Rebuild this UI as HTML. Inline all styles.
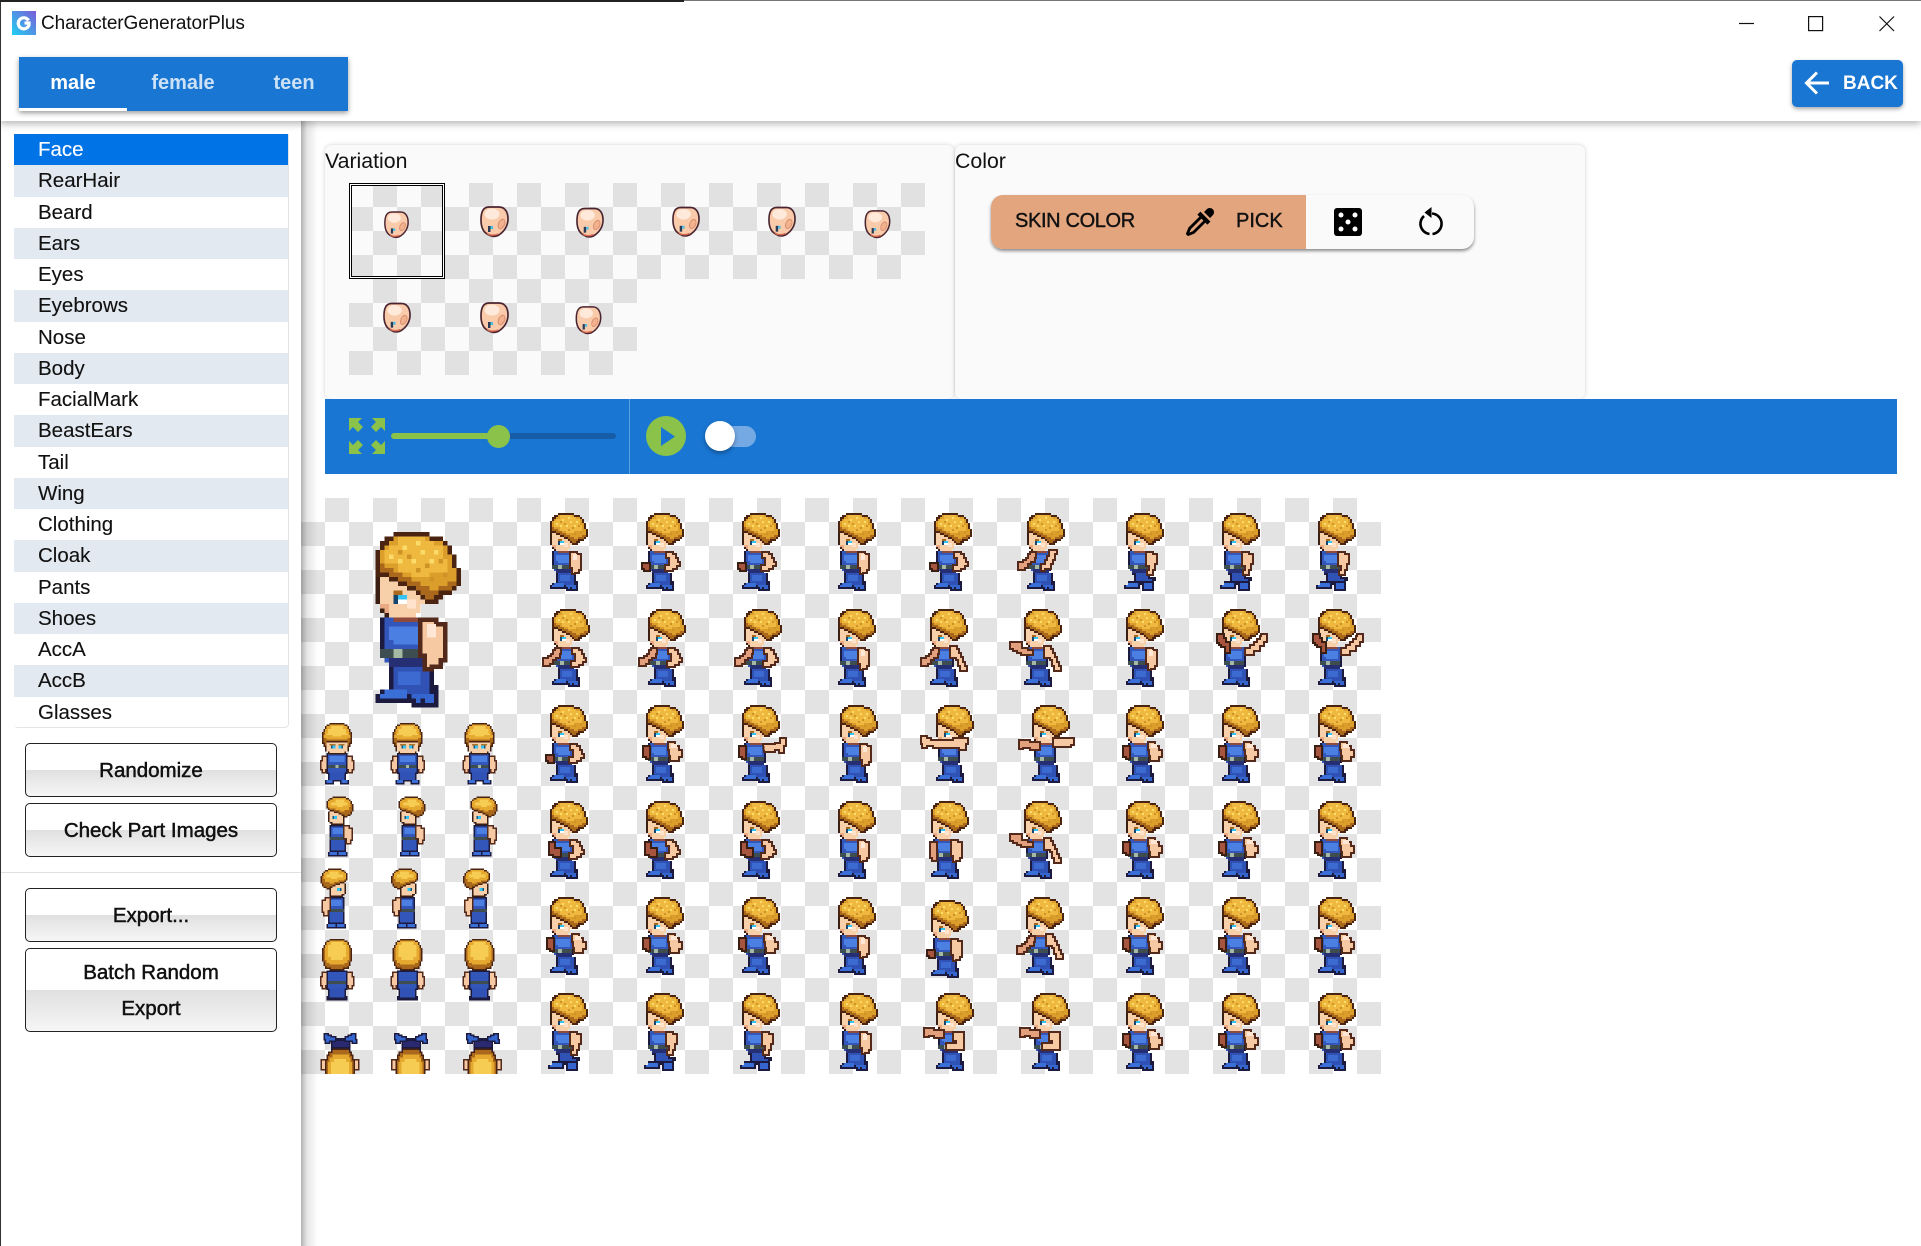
<!DOCTYPE html>
<html><head><meta charset="utf-8"><title>CharacterGeneratorPlus</title>
<style>
html,body{margin:0;padding:0;background:#fff}
body{position:relative;width:1921px;height:1246px;overflow:hidden;font-family:"Liberation Sans",Arial,sans-serif;color:#111}
div,span{position:absolute;box-sizing:border-box}
svg{position:absolute;overflow:visible}
.chk{background:conic-gradient(#e1e1e1 25%,transparent 0 50%,#e1e1e1 0 75%,transparent 0) 0 0/48px 48px}
.chk2{background:conic-gradient(#e3e3e3 25%,#fff 0 50%,#e3e3e3 0 75%,#fff 0) 0 0/48px 48px}
.it{left:14px;width:274px;height:31.25px;line-height:32px;padding-left:24px;font-size:20.5px;color:#111;-webkit-text-stroke:.12px #111}
.alt{background:#e3e9f0}
.btn{left:25px;width:252px;border:1px solid #222;border-radius:5px;background:linear-gradient(#fff 50%,#e0e0e0 50%,#f6f6f6 100%);text-align:center;font-size:20.5px;-webkit-text-stroke:.5px #111;color:#111}
.tab{top:57px;height:54px;line-height:52px;text-align:center;font-weight:bold;font-size:20px;color:#fff}
.lbl{font-size:21.3px;line-height:24px;top:148.5px;color:#111}
.s{fill:#f6c9a2;stroke:#52291a;stroke-width:1}
.d{fill:#e2a07c;stroke:#52291a;stroke-width:1}
.r{fill:#a8553f;stroke:#3b1e12;stroke-width:1}
</style></head><body>

<svg width="0" height="0" style="left:0;top:0">
<defs>
<g id="up" transform="translate(-.5 -.5)">
<path fill="#1c1a3e" d="M18 27H29V37H28V39H20V37H19V36H18Z"/>
<path fill="#3356bb" d="M19 27H28V38H21V37H19Z"/>
<path fill="#4b7fe2" d="M20 29H27V33H21V32H20Z"/>
<path fill="#262e74" d="M20 36H28V38H20Z"/>
<path fill="#3d4d50" d="M18 34H28V36H18Z"/>
<path fill="#a4b8a4" d="M21 34H23V36H21Z"/>
<path fill="#8f4a3a" d="M21 27H27V28H21Z"/>
<path fill="#3b1e12" d="M17 18H18V24H19V26H20V27H19V26H18V24H17Z"/>
<path fill="#f7cfa8" d="M18 18H20V19H22V20H24V21H26V22H27V23H28V24H27V26H26V27H20V26H19V24H18Z"/>
<path fill="#ffe3cc" d="M24 23H26V25H24Z"/>
<path fill="#eaa985" d="M18 24H20V26H19V25H18Z"/>
<path fill="#a9681c" d="M21 21H23V22H21Z"/>
<path fill="#14456e" d="M21 22H22V24H21Z"/>
<path fill="#35c3f4" d="M22 22H24V23H22Z"/>
<path fill="#fff" d="M22 23H24V24H22Z"/>
<path fill="#4a2410" d="M21 8H29V9H32V10H33V11H34V13H35V16H36V20H35V21H34V22H32V23H31V24H28V23H27V22H26V21H24V20H22V19H20V18H17V12H18V10H19V9H21Z"/>
<path fill="#a9681c" d="M21 9H29V10H32V11H33V13H34V16H35V20H34V21H31V22H30V23H28V22H27V21H26V20H24V19H22V18H20V17H18V12H19V11H20V10H21Z"/>
<path fill="#dc9e2a" d="M21 9H29V10H32V11H33V13H34V16H35V19H33V20H31V21H29V20H27V19H25V18H23V17H21V16H19V15H18V12H19V11H20V10H21Z"/>
<path fill="#efb93f" d="M22 9H28V10H30V11H32V14H33V17H29V18H25V17H22V15H19V12H20V11H22Z"/>
<path fill="#fbdc6a" d="M23 11h1v1h-1zM27 12h1v1h-1zM25 14h1v1h-1zM29 14h1v1h-1zM22 14h1v1h-1zM30 12h1v1h-1zM26 10h1v1h-1zM20 13h1v1h-1z"/>
<path fill="#cf9226" d="M24 13h1v1h-1zM28 15h1v1h-1zM26 16h1v1h-1zM31 14h1v1h-1zM22 12h1v1h-1zM32 17h1v1h-1zM29 18h1v1h-1z"/>
</g>
<g id="lg" transform="translate(-.5 -.5)">
<path fill="#c2703a" d="M20 38h1v4h-1z"/>
<path fill="#1c1a3e" d="M20 38H30V42H31V47H25V46H17V44H18V43H20Z"/>
<path fill="#3052b5" d="M21 38H29V44H21Z"/>
<path fill="#3d6ad0" d="M22 39H27V42H22Z"/>
<path fill="#3a6fd8" d="M19 43H24V45H18V44H19Z"/>
<path fill="#3566cf" d="M25 44H30V46H26V45H25Z"/>
<path fill="#1c1a3e" d="M27 45h1v1h-1z"/>
</g>
<g id="lg2" transform="translate(-.5 -.5)">
<path fill="#c2703a" d="M21 38h1v3h-1z"/>
<path fill="#1c1a3e" d="M21 38H29V40H32V42H31V47H25V44H24V46H16V44H18V42H21Z"/>
<path fill="#3052b5" d="M22 38H28V41H30V42H22Z"/>
<path fill="#3a6fd8" d="M18 43H23V45H17V44H18Z"/>
<path fill="#3566cf" d="M26 43H30V46H26Z"/>
</g>
<path id="aH" class="s" d="M26.5 27H30V28H32V36H31V37.5H29V38H27.5V35H26.5Z"/>
<path id="aK" class="s" d="M26.5 27H30V28H31.5V30H32.5V32H33.5V34H32V35.5H30V36.5H26V33.5H28V30H26.5Z"/>
<path id="aF" class="s" d="M26.5 26H30V27.5H31V29.5H32V31.5H33V34H34V36H35V38.5H31.5V36H30.5V33H29.5V32H26.5Z"/>
<path id="aM" class="s" d="M27.5 26H31V28H33V30H34.5V33.5H33V35.5H28.5V33H28V30H27.5Z"/>
<path id="fL" class="r" d="M14.500 32.500H18.500V36.500H15.500V35.500H14.500Z"/>
<path id="rB" class="r" d="M15 28H18.500V34.500H16.500V33.500H15Z"/>
<path id="oL" class="d" d="M21 27H18V28H17V30H16V31H14.500V32H12V36H15.500V35H17V33H18.500V32H20.500V30H21Z"/>
<path id="uL" class="d" d="M21 28H18.500V27H15.500V24H9.500V27.500H11V28.500H13V29.500H15V30.500H21Z"/>
<g id="A"><use href="#up"/><use href="#lg"/><use href="#aH"/><path fill="#ffe6d5" d="M28 28h2v3h-2z"/></g>
<g id="B"><use href="#up"/><use href="#lg"/><use href="#aK"/><use href="#fL"/></g>
<g id="C"><use href="#up"/><use href="#lg"/><use href="#oL"/><path class="s" d="M27.500 26H31.500V28H30.500V31H29.500V33H28.500V35.500H25.500V36.500H23.500V33H25.500V31H26.500V29H27.500Z"/></g>
<g id="D"><use href="#up"/><use href="#lg2"/><path class="s" d="M26.500 27H30V28H32V33H31V36H30V38.500H27V36H28V34H26.500Z"/></g>
<g id="E"><use href="#up"/><use href="#lg"/><use href="#aK"/><use href="#oL"/></g>
<g id="F"><use href="#up"/><use href="#lg"/><use href="#aF"/><use href="#oL"/></g>
<g id="G"><use href="#up"/><use href="#lg"/><use href="#aF"/><use href="#uL"/></g>
<g id="H"><use href="#up"/><use href="#lg"/><path class="r" d="M14 20H17.500V22H18.500V24H20.500V29.500H18V26.500H16V25.500H15V24.500H14Z"/><path class="s" d="M36 20H39V24H37.500V26H35.500V28.500H32.500V30.500H28V27H30.500V25.500H32.500V24H34V22.500H35.500V21H36Z"/></g>
<g id="K"><use href="#up"/><use href="#lg"/><use href="#rB"/><path class="s" d="M27 27H33V26.500H35.500V24H38.500V28H37.500V31.500H35V30H33V31H27.500Z"/></g>
<g id="L"><use href="#up"/><use href="#lg"/><path class="s" d="M9 23H12V24H14V25H25V24H32.500V27H31.500V30H28V29H15V28H12V29H9.500V27H9Z"/></g>
<g id="L2"><use href="#up"/><use href="#lg"/><path class="d" d="M20.500 26H15.500V25H10V29.500H12V29H15.500V30H20.500Z"/><path class="s" d="M27 24H37.500V27.500H36V28.500H27Z"/></g>
<g id="M"><use href="#up"/><use href="#lg"/><use href="#rB"/><use href="#aM"/><path fill="#ffe6d5" d="M29 27h3v2h-3z"/></g>
<g id="N"><use href="#up"/><use href="#lg"/><use href="#aK"/><path class="r" d="M16 28H19V31H22V35.500H18V34.500H16Z"/></g>
<g id="P"><use href="#up"/><use href="#lg"/><use href="#aH"/><path class="d" d="M16 28H19.500V37.500H17V36H16Z"/></g>
<g id="Q"><use href="#up"/><use href="#lg"/><use href="#aH"/><use href="#fL"/></g>
<g id="R"><use href="#up"/><use href="#lg"/><path class="d" d="M20.500 26H15.500V25H10.500V29.500H13V29H15.500V30H20.500Z"/><path class="s" d="M25 27H30.500V36H21.500V32.500H26.500V31.500H25Z"/></g>

<!-- small sprites -->
<g id="hF">
<path fill="#4a2410" d="M19 6H29V7H31V8H32V10H33V12H34V20H33V22H31V19H17V22H15V20H14V12H15V10H16V8H17V7H19Z"/>
<path fill="#a9681c" d="M19 7H29V8H31V10H32V12H33V19H32V21H31V18H17V21H16V19H15V12H16V10H17V8H19Z"/>
<path fill="#e6a92f" d="M19 7H29V8H31V10H32V14H33V16H31V17H17V16H15V14H16V10H17V8H19Z"/>
<path fill="#f6cc52" d="M20 8H28V10H30V13H31V14H27V15H21V14H17V13H18V10H20Z"/>
</g>
<g id="fF">
<path fill="#3b1e12" d="M16 17H32V25H30V27H18V25H16Z"/>
<path fill="#f7cfa8" d="M17 16H31V25H29V26H19V25H17Z"/>
<path fill="#b0732a" d="M19 20h4v1h-4zM25 20h4v1h-4z"/>
<path fill="#155a80" d="M20 21h1v2h-1zM27 21h1v2h-1z"/>
<path fill="#35c3f4" d="M21 21h2v2h-2zM25 21h2v2h-2z"/>
</g>
<g id="bF">
<path class="s" d="M14 28H18V37H16.500V39H14V37H13V31H14Z"/>
<path class="s" d="M30 28H34V31H35V37H34V39H31.500V37H30Z"/>
<path fill="#1c1a3e" d="M17 26H31V40H17Z"/>
<path fill="#3356bb" d="M18 27H30V39H18Z"/>
<path fill="#4b7fe2" d="M19 28H29V32H19Z"/>
<path fill="#3d4d50" d="M18 34H30V36H18Z"/>
<path fill="#a4b8a4" d="M23 34h2v2h-2z"/>
<path fill="#1c1a3e" d="M18 39H30V44H32V47H26V45H22V47H16V44H18Z"/>
<path fill="#3052b5" d="M19 39H29V44H19Z"/>
<path fill="#3a6fd8" d="M17 44H21V46H17ZM27 44H31V46H27Z"/>
</g>
<g id="sF"><use href="#bF"/><use href="#fF"/><use href="#hF"/></g>
<g id="sS">
<path fill="#1c1a3e" d="M19 26H30V38H30V44H31V47H18V44H19Z"/>
<path fill="#3356bb" d="M20 27H29V43H20Z"/>
<path fill="#4b7fe2" d="M21 28H28V32H21Z"/>
<path fill="#3d4d50" d="M19 34H29V36H19Z"/>
<path fill="#3a6fd8" d="M19 44H24V46H19ZM25 44H30V46H25Z"/>
<path fill="#3b1e12" d="M18 17H29V26H20V25H19V24H18Z"/>
<path fill="#f7cfa8" d="M19 17H28V25H21V24H19Z"/>
<path fill="#155a80" d="M21 20h1v2h-1z"/><path fill="#35c3f4" d="M22 20h2v2h-2z"/>
<path class="s" d="M28.500 26.500H32V28H34V36H33V38.500H30V35H28.500Z"/>
<path fill="#4a2410" d="M21 7H30V8H32V9H33V10H34V12H35V17H34V19H33V20H31V21H29V20H27V19H25V18H22V17H19V16H18V15H17V10H18V9H19V8H21Z"/>
<path fill="#a9681c" d="M21 8H30V9H32V10H33V12H34V17H33V19H31V20H29V19H27V18H25V17H22V16H19V15H18V10H19V9H21Z"/>
<path fill="#e6a92f" d="M21 8H30V9H32V10H33V14H32V16H29V17H26V16H23V15H19V14H18V10H19V9H21Z"/>
<path fill="#f6cc52" d="M23 9H29V11H31V13H28V14H24V13H20V11H23Z"/>
</g>
<g id="sB">
<path class="s" d="M14 28H18V37H16.500V39H14V37H13V31H14Z"/>
<path class="s" d="M30 28H34V31H35V37H34V39H31.500V37H30Z"/>
<path fill="#1c1a3e" d="M17 27H31V40H17Z"/>
<path fill="#3356bb" d="M18 28H30V39H18Z"/>
<path fill="#3d4d50" d="M18 34H30V36H18Z"/>
<path fill="#1c1a3e" d="M18 39H30V44H31V47H17V44H18Z"/>
<path fill="#3052b5" d="M19 39H29V45H19Z"/>
<path fill="#4a2410" d="M19 6H29V7H31V8H32V10H33V12H34V21H33V24H32V26H29V27H19V26H16V24H15V21H14V12H15V10H16V8H17V7H19Z"/>
<path fill="#a9681c" d="M19 7H29V8H31V10H32V12H33V21H32V24H31V25H28V26H20V25H17V24H16V21H15V12H16V10H17V8H19Z"/>
<path fill="#e6a92f" d="M19 7H29V8H31V10H32V20H31V22H29V23H19V22H17V20H16V10H17V8H19Z"/>
<path fill="#f6cc52" d="M20 8H28V10H30V18H28V20H20V18H18V10H20Z"/>
</g>
<g id="sP">
<path class="s" d="M13.500 38.500H17V45H13.500ZM35.500 38.500H38.500V45H35.500Z"/>
<path fill="#1c1a3e" d="M20 24H33V33H20Z"/>
<path fill="#2b2a70" d="M21 26H32V30H21Z"/>
<path fill="#3566cf" stroke="#1c1a3e" d="M15.500 21H18V22H20V23H23V26H19V27.500H16V25H15.500ZM33.500 21H36.500V25H37V27.500H34V26H29.500V23H31.500V22H33.500Z"/>
<path fill="#4a2410" d="M21 31H32V33H34V35H35V38H36V48H16V38H17V35H18V33H21Z"/>
<path fill="#a9681c" d="M21 32H32V34H33V36H34V39H35V48H17V39H18V36H19V34H21Z"/>
<path fill="#e6a92f" d="M21 35H32V37H33V40H34V48H18V40H19V37H21Z"/>
<path fill="#f6cc52" d="M22 38H30V40H32V48H20V40H22Z"/>
</g>

<!-- variation face -->
<g id="fc">
<path fill="#f9cbaa" stroke="#4a2530" stroke-width="1.700" d="M9 1H19C25 1 28 6 28 13C28 20 24 26 18 29.500C15 31 11 30.500 9 29C4 27 1 22 1 14C1 6 3 1 9 1Z"/>
<ellipse cx="12" cy="8" rx="7.500" ry="5.500" fill="#ffe9da"/>
<ellipse cx="21.500" cy="18" rx="3" ry="5" transform="rotate(25 21.500 18)" fill="#f2b28e" stroke="#d98e6f"/>
<rect x="8" y="20" width="2.500" height="6" fill="#2a3a55"/>
<rect x="10.500" y="20" width="2.500" height="3" fill="#4bbde0"/>
<path d="M7 27C9 29.500 14 29.800 18 28" stroke="#d96a50" stroke-width="1.500" fill="none"/>
</g>
</defs>
</svg>

<!-- main sheet -->
<div class="chk2" style="left:301px;top:498px;width:1080px;height:576px"></div>
<svg style="left:301px;top:498px" width="216" height="216" viewBox="0 0 48 48" shape-rendering="crispEdges"><use href="#A"/></svg>

<svg style="left:301px;top:714px" width="216" height="360" viewBox="0 0 144 240" shape-rendering="crispEdges">
<clipPath id="cp"><rect width="144" height="240"/></clipPath>
<g clip-path="url(#cp)">
<use href="#sF"/><use href="#sF" x="47"/><use href="#sF" x="95"/>
<use href="#sS" y="48"/><use href="#sS" x="48" y="48"/><use href="#sS" x="96" y="48"/>
<g transform="translate(48 96) scale(-1 1)"><use href="#sS"/></g><g transform="translate(95 96) scale(-1 1)"><use href="#sS"/></g><g transform="translate(143 96) scale(-1 1)"><use href="#sS"/></g>
<use href="#sB" y="144"/><use href="#sB" x="47" y="144"/><use href="#sB" x="95" y="144"/>
<use href="#sP" y="192"/><use href="#sP" x="47" y="192"/><use href="#sP" x="95" y="192"/>
</g></svg>

<svg style="left:517px;top:498px" width="864" height="576" viewBox="0 0 432 288" shape-rendering="crispEdges">
<use href="#A"/><use href="#B" x="48"/><use href="#B" x="96"/><use href="#A" x="144"/><use href="#B" x="192"/><use href="#C" x="238.500"/><use href="#D" x="288"/><use href="#D" x="336"/><use href="#D" x="384"/>
<use href="#E" x="1" y="48"/><use href="#E" x="49" y="48"/><use href="#E" x="97" y="48"/><use href="#A" x="144" y="48"/><use href="#F" x="190" y="48"/><use href="#G" x="237" y="48"/><use href="#A" x="288" y="48"/><use href="#H" x="336" y="48"/><use href="#H" x="384" y="48"/>
<use href="#B" y="96"/><use href="#M" x="48" y="96"/><use href="#K" x="96" y="96"/><use href="#A" x="145" y="96"/><use href="#L" x="193" y="96"/><use href="#L2" x="241" y="96"/><use href="#M" x="288" y="96"/><use href="#M" x="336" y="96"/><use href="#M" x="384" y="96"/>
<use href="#N" y="144"/><use href="#N" x="48" y="144"/><use href="#N" x="96" y="144"/><use href="#A" x="144" y="144"/><use href="#P" x="190.500" y="144"/><use href="#G" x="237" y="144"/><use href="#M" x="288" y="144"/><use href="#M" x="336" y="144"/><use href="#M" x="384" y="144"/>
<use href="#M" y="192"/><use href="#M" x="48" y="192"/><use href="#M" x="96" y="192"/><use href="#A" x="144" y="192"/><use href="#Q" x="190.500" y="193.500"/><use href="#F" x="238" y="192"/><use href="#M" x="288" y="192"/><use href="#M" x="336" y="192"/><use href="#M" x="384" y="192"/>
<use href="#D" y="240"/><use href="#D" x="48" y="240"/><use href="#D" x="96" y="240"/><use href="#A" x="145" y="240"/><use href="#R" x="193" y="240"/><use href="#R" x="241" y="240"/><use href="#M" x="288" y="240"/><use href="#M" x="336" y="240"/><use href="#M" x="384" y="240"/>
</svg>

<!-- variation panel -->
<div style="left:325px;top:145px;width:629px;height:254px;background:#fafafa;border-radius:7px;box-shadow:0 0 5px rgba(0,0,0,.18)"></div>
<div class="lbl" style="left:325px">Variation</div>
<div class="chk" style="left:349px;top:183px;width:576px;height:96px"></div>
<div class="chk" style="left:349px;top:279px;width:288px;height:96px"></div>
<div style="left:349px;top:183px;width:96px;height:96px;box-shadow:inset 0 0 0 1px #000,inset 0 0 0 2px #fff,inset 0 0 0 3px #000"></div>
<svg style="left:384px;top:211px" width="25" height="27" viewBox="0 0 29 31"><use href="#fc"/></svg>
<svg style="left:480px;top:206px" width="29" height="31" viewBox="0 0 29 31"><use href="#fc"/></svg>
<svg style="left:576px;top:206px" width="28" height="33" viewBox="0 0 29 31"><use href="#fc"/></svg>
<svg style="left:672px;top:206px" width="28" height="31" viewBox="0 0 29 31"><use href="#fc"/></svg>
<svg style="left:768px;top:206px" width="28" height="31" viewBox="0 0 29 31"><use href="#fc"/></svg>
<svg style="left:864px;top:210px" width="27" height="28" viewBox="0 0 29 31"><use href="#fc"/></svg>
<svg style="left:383px;top:302px" width="28" height="31" viewBox="0 0 29 31"><use href="#fc"/></svg>
<svg style="left:480px;top:302px" width="29" height="31" viewBox="0 0 29 31"><use href="#fc"/></svg>
<svg style="left:575px;top:306px" width="27" height="28" viewBox="0 0 29 31"><use href="#fc"/></svg>

<!-- color panel -->
<div style="left:955px;top:145px;width:630px;height:254px;background:#fafafa;border-radius:7px;box-shadow:0 0 5px rgba(0,0,0,.18)"></div>
<div class="lbl" style="left:955px">Color</div>
<div style="left:991px;top:195px;width:483px;height:54px;background:#fafafa;border-radius:12px;box-shadow:0 2px 3px rgba(0,0,0,.45)"></div>
<div style="left:991px;top:195px;width:315px;height:54px;background:#e2a57d;border-radius:12px 0 0 12px"></div>
<div style="left:1015px;top:207px;font-size:20px;line-height:28px;letter-spacing:-.35px;-webkit-text-stroke:.4px #111;white-space:nowrap">SKIN COLOR</div>
<div style="left:1236px;top:207px;font-size:20px;line-height:28px;-webkit-text-stroke:.4px #111">PICK</div>
<svg style="left:1183px;top:205px" width="34" height="34" viewBox="0 0 24 24"><path d="M19.35 11.72L17.22 13.85L15.81 12.43L8.1 20.14L3.5 22L2 20.5L3.86 15.9L11.57 8.19L10.15 6.78L12.28 4.65L19.35 11.72M16.76 3C17.93 1.83 19.83 1.83 21 3C22.17 4.17 22.17 6.07 21 7.24L19.08 9.16L14.84 4.92L16.76 3M5.56 17.03L4.5 19.5L6.97 18.44L14.4 11L13 9.6L5.56 17.03Z" fill="#000"/></svg>
<svg style="left:1334px;top:208px" width="28" height="28" viewBox="0 0 28 28"><rect width="28" height="28" rx="3" fill="#000"/><g fill="#fff"><circle cx="7" cy="7" r="2.500"/><circle cx="21" cy="7" r="2.500"/><circle cx="14" cy="14" r="2.500"/><circle cx="7" cy="21" r="2.500"/><circle cx="21" cy="21" r="2.500"/></g></svg>
<svg style="left:1418px;top:206px" width="26" height="31" viewBox="0 0 26 31"><path d="M14 7.500A10.300 10.300 0 0 1 14.500 28" fill="none" stroke="#000" stroke-width="2.600"/><path d="M11.500 28A10.300 10.300 0 0 1 6 10" fill="none" stroke="#000" stroke-width="2.600"/><path d="M13.500 1V12L6.500 6.500Z" fill="#000"/></svg>

<!-- blue bar -->
<div style="left:325px;top:399px;width:1572px;height:75px;background:#1976d2"></div>
<div style="left:629px;top:399px;width:1px;height:75px;background:#5c9fe2"></div>
<svg style="left:349px;top:418px" width="36" height="36" viewBox="0 0 36 36" fill="#8bc34a"><path d="M0 0H13L9 4L14 9L9 14L4 9L0 13Z"/><path d="M36 0H23L27 4L22 9L27 14L32 9L36 13Z"/><path d="M0 36H13L9 32L14 27L9 22L4 27L0 23Z"/><path d="M36 36H23L27 32L22 27L27 22L32 27L36 23Z"/></svg>
<div style="left:391px;top:433px;width:225px;height:6px;border-radius:3px;background:#175ca6"></div>
<div style="left:391px;top:433px;width:107px;height:6px;border-radius:3px;background:#8bc34a"></div>
<div style="left:486.500px;top:424.500px;width:23px;height:23px;border-radius:50%;background:#8bc34a"></div>
<div style="left:646px;top:416px;width:40px;height:40px;border-radius:50%;background:#8bc34a"></div>
<svg style="left:661px;top:427px" width="14" height="19" viewBox="0 0 14 19"><path d="M0 0L14 9.500L0 19Z" fill="#1976d2"/></svg>
<div style="left:708px;top:426px;width:48px;height:21px;border-radius:11px;background:#75a9e4"></div>
<div style="left:705px;top:421px;width:30px;height:30px;border-radius:50%;background:#fff;box-shadow:0 2px 4px rgba(0,0,0,.35)"></div>

<!-- sidebar -->
<div style="left:301px;top:121px;width:17px;height:1125px;background:linear-gradient(90deg,rgba(0,0,0,.3),rgba(0,0,0,.1) 35%,rgba(0,0,0,0))"></div>
<div style="left:1px;top:121px;width:300px;height:1125px;background:#fff"></div>
<div style="left:14px;top:134px;width:275px;height:594px;border:1px solid #e4e4e4;border-top:none;border-left:none;border-radius:0 0 4px 4px"></div>
<div class="it" style="top:134px;height:31.250px;background:#0073e6;color:#fff;-webkit-text-stroke:.12px #fff">Face</div>
<div class="it alt" style="top:165.250px">RearHair</div>
<div class="it" style="top:196.500px">Beard</div>
<div class="it alt" style="top:227.750px">Ears</div>
<div class="it" style="top:259px">Eyes</div>
<div class="it alt" style="top:290.250px">Eyebrows</div>
<div class="it" style="top:321.500px">Nose</div>
<div class="it alt" style="top:352.750px">Body</div>
<div class="it" style="top:384px">FacialMark</div>
<div class="it alt" style="top:415.250px">BeastEars</div>
<div class="it" style="top:446.500px">Tail</div>
<div class="it alt" style="top:477.750px">Wing</div>
<div class="it" style="top:509px">Clothing</div>
<div class="it alt" style="top:540.250px">Cloak</div>
<div class="it" style="top:571.500px">Pants</div>
<div class="it alt" style="top:602.750px">Shoes</div>
<div class="it" style="top:634px">AccA</div>
<div class="it alt" style="top:665.250px">AccB</div>
<div class="it" style="top:696.500px">Glasses</div>

<div class="btn" style="top:743px;height:54px;line-height:53px">Randomize</div>
<div class="btn" style="top:803px;height:54px;line-height:53px">Check Part Images</div>
<div style="left:1px;top:872px;width:300px;height:1px;background:#e0e0e0"></div>
<div class="btn" style="top:888px;height:54px;line-height:53px">Export...</div>
<div class="btn" style="top:948px;height:84px;line-height:36px;padding-top:6px">Batch Random<br>Export</div>

<!-- app bar -->
<div style="left:0;top:0;width:1921px;height:121px;background:#fff;box-shadow:0 3px 7px rgba(0,0,0,.28)"></div>
<div style="left:0;top:0;width:1px;height:1246px;background:#333"></div>
<div style="left:0;top:0;width:684px;height:2px;background:#222"></div>
<div style="left:684px;top:0;width:1237px;height:1px;background:#777"></div>
<svg style="left:12px;top:11px" width="24" height="24" viewBox="0 0 24 24"><defs><linearGradient id="ig" x1="0" y1="1" x2="1" y2="0"><stop offset="0" stop-color="#1fd0f2"/><stop offset="1" stop-color="#7c5cd8"/></linearGradient></defs><rect width="24" height="24" fill="url(#ig)"/><path d="M16.500 9.500A5.500 5.500 0 1 0 17 14V12H12.500" fill="none" stroke="#fff" stroke-width="3.200"/></svg>
<div style="left:41px;top:11px;font-size:19px;line-height:26px;letter-spacing:-.1px;color:#111;white-space:nowrap">CharacterGeneratorPlus</div>

<svg style="left:1739px;top:16px" width="156" height="16" viewBox="0 0 156 16" fill="none" stroke="#111" stroke-width="1.200"><path d="M0 7.500H15"/><rect x="69.600" y=".6" width="14" height="14"/><path d="M140.500 .5L155 15M155 .5L140.500 15"/></svg>

<div style="left:19px;top:57px;width:329px;height:54px;background:#1976d2;box-shadow:0 2px 5px rgba(0,0,0,.4)"></div>
<div class="tab" style="left:19px;width:108px">male</div>
<div style="left:19px;top:108px;width:108px;height:3px;background:#fff"></div>
<div class="tab" style="left:127px;width:112px;color:rgba(255,255,255,.78)">female</div>
<div class="tab" style="left:239px;width:110px;color:rgba(255,255,255,.78)">teen</div>

<div style="left:1792px;top:60px;width:111px;height:47px;background:#1976d2;border-radius:5px;box-shadow:0 2px 4px rgba(0,0,0,.35)"></div>
<svg style="left:1804px;top:71px" width="25" height="24" viewBox="0 0 25 24" fill="none" stroke="#fff" stroke-width="3"><path d="M25 12H3M13 1.500L2.500 12L13 22.500"/></svg>
<div style="left:1843px;top:60px;height:47px;line-height:48px;font-size:19px;font-weight:bold;color:#fff">BACK</div>
</body></html>
